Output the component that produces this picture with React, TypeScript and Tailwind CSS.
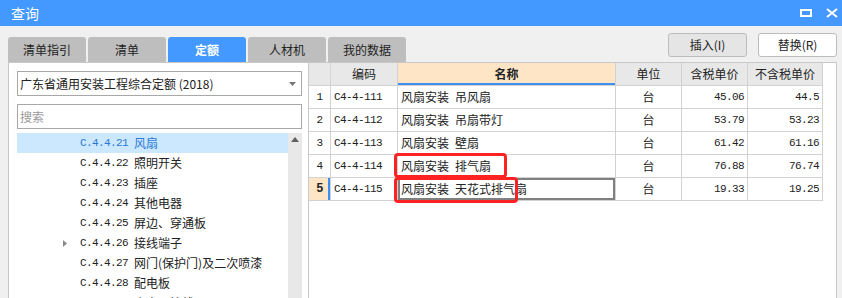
const TABS = ["清单指引", "清单", "定额", "人材机", "我的数据"];

const TREE = [
  { code: "C.4.4.21", name: "风扇", selected: true },
  { code: "C.4.4.22", name: "照明开关" },
  { code: "C.4.4.23", name: "插座" },
  { code: "C.4.4.24", name: "其他电器" },
  { code: "C.4.4.25", name: "屏边、穿通板" },
  { code: "C.4.4.26", name: "接线端子", expandable: true },
  { code: "C.4.4.27", name: "网门(保护门)及二次喷漆" },
  { code: "C.4.4.28", name: "配电板" },
  { code: "C.4.4.29", name: "小电器接线" },
];

const ROWS = [
  { no: 1, code: "C4-4-111", name: "风扇安装 吊风扇", unit: "台", tax: "45.06", noTax: "44.5" },
  { no: 2, code: "C4-4-112", name: "风扇安装 吊扇带灯", unit: "台", tax: "53.79", noTax: "53.23" },
  { no: 3, code: "C4-4-113", name: "风扇安装 壁扇", unit: "台", tax: "61.42", noTax: "61.16" },
  { no: 4, code: "C4-4-114", name: "风扇安装 排气扇", unit: "台", tax: "76.88", noTax: "76.74" },
  { no: 5, code: "C4-4-115", name: "风扇安装 天花式排气扇", unit: "台", tax: "19.33", noTax: "19.25" },
];

const cjk = "font-['Noto_Sans_CJK_SC',sans-serif]";
const mono = "font-['Liberation_Mono','Noto_Sans_CJK_SC',monospace] text-[11px] tracking-[-0.6px]";
const cell = "border-r border-b border-[#d2d2d2] h-[23px] flex items-center";

export default function App() {
  return (
    <div className={`w-[842px] h-[298px] overflow-hidden bg-[#f0f0f0] flex flex-col ${cjk} text-[#222]`}>
      {/* Title bar */}
      <div className="h-[26px] bg-[#4399ff] flex items-center pl-[11px] pr-[4px] shrink-0">
        <span className="text-white text-[14px] leading-none">查询</span>
        <div className="ml-auto flex items-center gap-[14px]">
          <svg width="12" height="10" viewBox="0 0 12 10">
            <rect x="1" y="2" width="10" height="6" fill="none" stroke="white" strokeWidth="2" />
          </svg>
          <svg width="12" height="10" viewBox="0 0 12 10">
            <path d="M1 1 L11 9 M11 1 L1 9" stroke="white" strokeWidth="2" />
          </svg>
        </div>
      </div>

      {/* Tabs + buttons */}
      <div className="h-[36px] flex items-end pl-2 pr-[5px] shrink-0">
        <div className="flex gap-[2px]">
          {TABS.map((t) => (
            <div
              key={t}
              className={`w-[78px] h-[25px] rounded-t-[3px] flex items-center justify-center text-[12px] leading-none ${
                t === "定额" ? "bg-[#4399ff] text-white font-bold" : "bg-[#bebebe] text-[#222]"
              }`}
            >
              {t}
            </div>
          ))}
        </div>
        <div className="ml-auto mb-[5px] flex gap-[11px]">
          <button className="w-[79px] h-[24px] rounded-[3px] border border-[#bcbcbc] bg-[#e5e5e5] text-[12px] leading-none">
            插入(I)
          </button>
          <button className="w-[79px] h-[24px] rounded-[3px] border border-[#bcbcbc] bg-white text-[12px] leading-none">
            替换(R)
          </button>
        </div>
      </div>

      {/* Main */}
      <div className="flex-1 flex pl-2 pr-[5px] min-h-0">
        {/* Left panel */}
        <div className="w-[300px] bg-white border-l border-t border-[#c8c8c8] pl-[8px] pt-[8px] pr-[6px] flex flex-col">
          <div className="h-[25px] border border-[#a8a8a8] flex items-center pl-[2px] pr-[5px]">
            <span className="text-[12px] leading-none">广东省通用安装工程综合定额 (2018)</span>
            <svg className="ml-auto" width="7" height="4" viewBox="0 0 7 4">
              <path d="M0 0 H7 L3.5 4 Z" fill="#777" />
            </svg>
          </div>
          <div className="mt-[8px] h-[25px] border border-[#a8a8a8] flex items-center pl-[2px]">
            <span className="text-[12px] leading-none text-[#9a9a9a]">搜索</span>
          </div>
          <div className="mt-[4px] flex-1 flex min-h-0">
            <div className="flex-1 flex flex-col">
              {TREE.map((r) => (
                <div
                  key={r.code}
                  className={`h-[20px] shrink-0 flex items-center pl-[46px] ${r.selected ? "bg-[#cce8ff] text-[#2a78d6]" : ""}`}
                >
                  <span className="w-[17px] flex items-center">
                    {r.expandable && (
                      <svg width="4" height="7" viewBox="0 0 4 7">
                        <path d="M0 0 L4 3.5 L0 7 Z" fill="#8a8a8a" />
                      </svg>
                    )}
                  </span>
                  <span className={`${mono} whitespace-pre leading-none`}>{r.code + " "}</span>
                  <span className="text-[12px] leading-none">{r.name}</span>
                </div>
              ))}
            </div>
            <div className="w-[14px] bg-[#e8e8e8] flex justify-center pt-[4px]">
              <svg width="8" height="5" viewBox="0 0 8 5">
                <path d="M0 5 L4 0 L8 5 Z" fill="#606060" />
              </svg>
            </div>
          </div>
        </div>

        {/* Right panel */}
        <div className="flex-1 bg-white border-l border-t border-r border-[#c8c8c8] relative">
          <div className="grid grid-cols-[22px_67px_218px_66px_66px_75px] w-fit text-[12px] leading-none">
            <div className={`${cell} bg-[#e8e8e8]`} />
            <div className={`${cell} bg-[#e8e8e8] justify-center`}>编码</div>
            <div className={`${cell} bg-[#fde5c6] justify-center font-bold shadow-[inset_0_-2px_0_#3d8ef0]`}>名称</div>
            <div className={`${cell} bg-[#e8e8e8] justify-center`}>单位</div>
            <div className={`${cell} bg-[#e8e8e8] justify-center`}>含税单价</div>
            <div className={`${cell} bg-[#e8e8e8] justify-center`}>不含税单价</div>

            {ROWS.map((r) => {
              const active = r.no === 5;
              const [head, tail] = r.name.split(" ");
              return [
                <div
                  key={`n${r.no}`}
                  className={`${cell} justify-center ${mono} ${
                    active ? "bg-[#fde5c6] font-bold text-[12px] shadow-[inset_-2px_0_0_#3d8ef0]" : ""
                  }`}
                >
                  {r.no}
                </div>,
                <div key={`c${r.no}`} className={`${cell} pl-[3px] ${mono}`}>
                  {r.code}
                </div>,
                <div
                  key={`m${r.no}`}
                  className={`${cell} pl-[3px] gap-[6px] ${active ? "shadow-[inset_0_0_0_2px_#808080]" : ""}`}
                >
                  <span>{head}</span>
                  <span>{tail}</span>
                </div>,
                <div key={`u${r.no}`} className={`${cell} justify-center`}>
                  {r.unit}
                </div>,
                <div key={`t${r.no}`} className={`${cell} justify-end pr-[3px] ${mono}`}>
                  {r.tax}
                </div>,
                <div key={`x${r.no}`} className={`${cell} justify-end pr-[3px] ${mono}`}>
                  {r.noTax}
                </div>,
              ];
            })}
          </div>

          {/* Red annotation boxes */}
          <div className="absolute left-[85px] top-[90px] w-[113px] h-[25px] border-[3px] border-[#ff2222] rounded-[4px]" />
          <div className="absolute left-[85px] top-[114px] w-[124px] h-[26px] border-[3px] border-[#ff2222] rounded-[4px]" />
        </div>
      </div>
    </div>
  );
}
